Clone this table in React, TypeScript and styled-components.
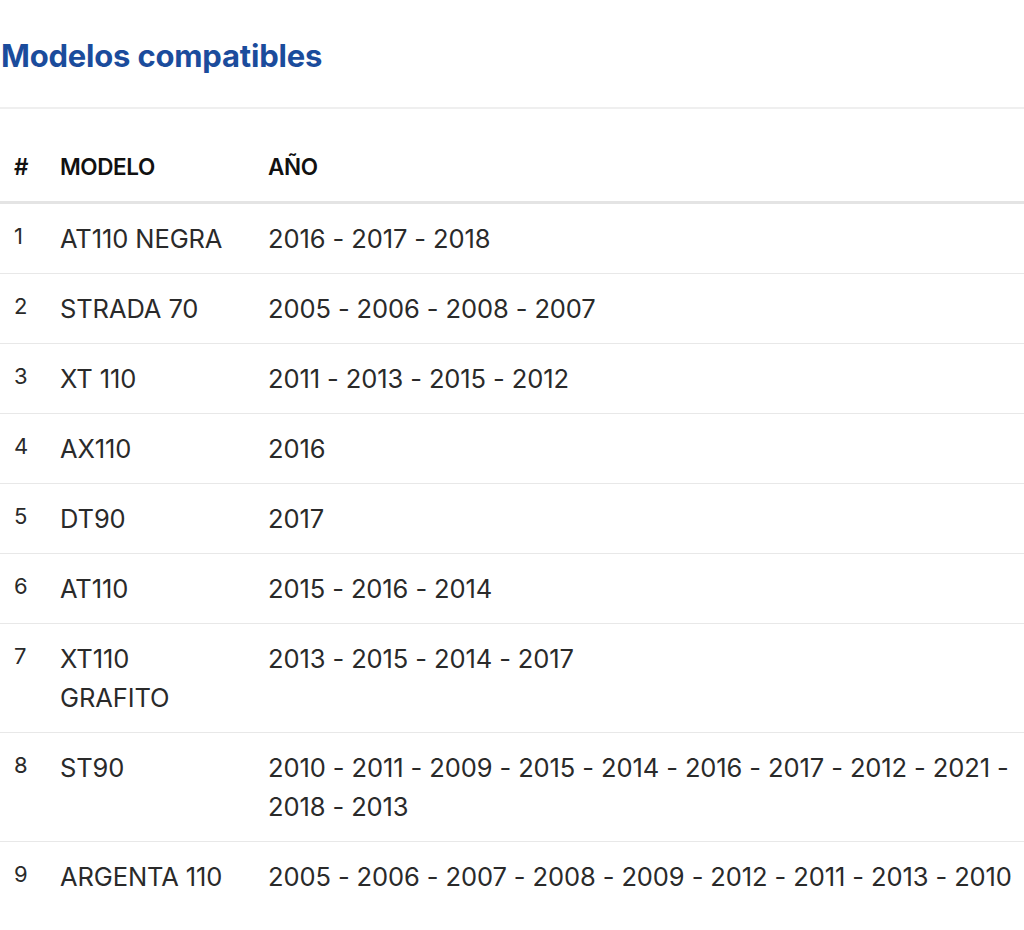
import React from "react";
import styled, { createGlobalStyle } from "styled-components";

const Global = createGlobalStyle`
  html, body { margin: 0; padding: 0; background: #fff; overflow: hidden; }
  body { font-family: Inter, "Noto Sans", sans-serif; color: #2a2a2a; }
`;

const Page = styled.div`
  width: 1024px;
  padding-top: 32px;
`;

const TitleBar = styled.div`
  padding: 0 0 27px 1px;
  border-bottom: 2px solid #efefef;
`;

const Title = styled.h2`
  margin: 0;
  font-size: 31px;
  line-height: 48px;
  font-weight: 700;
  color: #1b4c9c;
  letter-spacing: -0.2px;
`;

const Table = styled.table`
  width: 1040px;
  margin-top: 22px;
  border-collapse: collapse;
  table-layout: fixed;
`;

const HeadCell = styled.th<{ $w?: number }>`
  ${(p) => (p.$w ? `width: ${p.$w}px;` : "")}
  text-align: left;
  font-size: 22.5px;
  font-weight: 600;
  color: #111;
  padding: 17px 14px 15px;
  line-height: 38px;
  border-bottom: 3px solid #e4e4e4;
  letter-spacing: -0.4px;
`;

const Row = styled.tr`
  border-bottom: 1px solid #e8e8e8;
  &:last-child { border-bottom: none; }
`;

const Cell = styled.td<{ $small?: boolean }>`
  vertical-align: top;
  padding: 15px 14px 15px;
  font-size: ${(p) => (p.$small ? "22px" : "25.5px")};
  line-height: ${(p) => (p.$small ? "34px" : "39px")};
  color: #2a2a2a;
  letter-spacing: -0.1px;
`;

const rows: [string, string][] = [
  ["AT110 NEGRA", "2016 - 2017 - 2018"],
  ["STRADA 70", "2005 - 2006 - 2008 - 2007"],
  ["XT 110", "2011 - 2013 - 2015 - 2012"],
  ["AX110", "2016"],
  ["DT90", "2017"],
  ["AT110", "2015 - 2016 - 2014"],
  ["XT110 GRAFITO", "2013 - 2015 - 2014 - 2017"],
  ["ST90", "2010 - 2011 - 2009 - 2015 - 2014 - 2016 - 2017 - 2012 - 2021 - 2018 - 2013"],
  ["ARGENTA 110", "2005 - 2006 - 2007 - 2008 - 2009 - 2012 - 2011 - 2013 - 2010"],
];

export default function App() {
  return (
    <Page>
      <Global />
      <TitleBar>
        <Title>Modelos compatibles</Title>
      </TitleBar>
      <Table>
        <thead>
          <tr>
            <HeadCell $w={18}>#</HeadCell>
            <HeadCell $w={180}>MODELO</HeadCell>
            <HeadCell>AÑO</HeadCell>
          </tr>
        </thead>
        <tbody>
          {rows.map(([m, y], i) => (
            <Row key={i}>
              <Cell $small>{i + 1}</Cell>
              <Cell>{m}</Cell>
              <Cell>{y}</Cell>
            </Row>
          ))}
        </tbody>
      </Table>
    </Page>
  );
}
